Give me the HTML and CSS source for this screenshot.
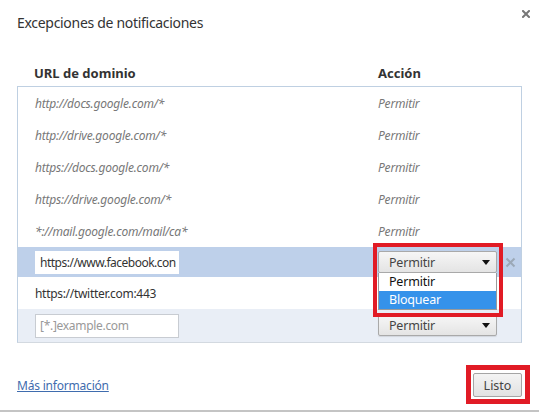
FILE: index.html
```html
<!DOCTYPE html>
<html lang="es">
<head>
<meta charset="utf-8">
<title>Excepciones de notificaciones</title>
<link rel="stylesheet" href="styles.css">
</head>
<body>
<div class="dialog">
  <div class="titlebar">
    <div class="title">Excepciones de notificaciones</div>
    <div class="close" aria-label="Cerrar">
      <svg width="8" height="8" viewBox="0 0 8 8"><path d="M1 1L7 7M7 1L1 7" stroke="#777" stroke-width="2" stroke-linecap="square"/></svg>
    </div>
  </div>
  <div class="headers">
    <div class="hcell first">URL de dominio</div>
    <div class="hcell">Acción</div>
  </div>
  <div class="list">
    <div class="row static"><div class="c1">http://docs.google.com/*</div><div class="c2">Permitir</div></div>
    <div class="row static"><div class="c1">http://drive.google.com/*</div><div class="c2">Permitir</div></div>
    <div class="row static"><div class="c1">https://docs.google.com/*</div><div class="c2">Permitir</div></div>
    <div class="row static"><div class="c1">https://drive.google.com/*</div><div class="c2">Permitir</div></div>
    <div class="row static"><div class="c1">*://mail.google.com/mail/ca*</div><div class="c2">Permitir</div></div>
    <div class="row selected">
      <div class="c1"><div class="input">https://www.facebook.con</div></div>
      <div class="c2 actions">
        <div class="select-wrap">
          <div class="select"><span>Permitir</span><span class="arrow"></span></div>
          <div class="menu">
            <div class="opt">Permitir</div>
            <div class="opt hl">Bloquear</div>
          </div>
          <div class="redbox"></div>
        </div>
        <div class="rm">
          <svg width="11" height="11" viewBox="0 0 11 11"><path d="M1.5 1.5L9.5 9.5M9.5 1.5L1.5 9.5" stroke="#9ba8b7" stroke-width="2"/></svg>
        </div>
      </div>
    </div>
    <div class="row plain"><div class="c1">https://twitter.com:443</div><div class="c2"></div></div>
    <div class="row newrow">
      <div class="c1"><div class="input placeholder">[*.]example.com</div></div>
      <div class="c2"><div class="select small"><span>Permitir</span><span class="arrow"></span></div></div>
    </div>
  </div>
  <div class="footer">
    <a class="link" href="#">Más información</a>
    <div class="btn-wrap">
      <div class="btn">Listo</div>
      <div class="redbox2"></div>
    </div>
  </div>
</div>
</body>
</html>
```
FILE: styles.css
```css
html, body {
  margin: 0;
  padding: 0;
  background: #fff;
}
body {
  width: 539px;
  height: 412px;
  overflow: hidden;
  font-family: "Noto Sans", "Open Sans", sans-serif;
  color: #333;
}
.dialog {
  height: 410px;
  border-bottom: 2px solid #c4c4c4;
  padding: 0 17px;
  display: flex;
  flex-direction: column;
}
.titlebar {
  display: flex;
  justify-content: space-between;
  padding-top: 12px;
}
.title {
  font-size: 14px;
  letter-spacing: -0.3px;
  line-height: 22px;
  color: #333;
}
.close {
  margin-top: -2px;
  margin-right: -8px;
  width: 8px;
  height: 8px;
}
.close svg { display: block; }
.headers {
  display: grid;
  grid-template-columns: 361px 1fr;
  margin-top: 30px;
  margin-bottom: 4px;
  font-size: 13px;
  line-height: 18px;
  font-weight: bold;
  color: #333;
}
.hcell.first { padding-left: 17px; }
.list {
  border: 1px solid #bfd0e2;
  border-bottom-color: #d3d9e0;
}
.row {
  display: grid;
  grid-template-columns: 360px 1fr;
  align-items: center;
  height: 32px;
  font-size: 12px;
  letter-spacing: -0.2px;
}
.row .c1 { padding-left: 17px; }
.row.static { color: #777; font-style: italic; }
.row.selected { height: 30px; background: #bed0ea; }
.row.plain { color: #333; letter-spacing: -0.3px; }
.row.newrow { height: 33px; background: #e9eef6; }
.input {
  width: 144px;
  height: 23px;
  box-sizing: border-box;
  padding: 0 3px 0 4px;
  line-height: 21px;
  background: #fff;
  border: 1px solid #fff;
  color: #333;
  white-space: nowrap;
  overflow: hidden;
  font-size: 12px;
  letter-spacing: -0.5px;
}
.input.placeholder {
  height: 24px;
  line-height: 22px;
  border-color: #c8ccd2;
  color: #999;
  letter-spacing: -0.3px;
}
.actions {
  display: flex;
  align-items: center;
}
.select-wrap {
  position: relative;
}
.select {
  width: 119px;
  height: 22px;
  box-sizing: border-box;
  border: 1px solid #a9a9a9;
  border-radius: 2px;
  background: linear-gradient(#f6f6f6, #e4e4e4);
  display: flex;
  align-items: center;
  justify-content: space-between;
  padding: 0 6px 0 10px;
  font-size: 12.5px;
  letter-spacing: -0.2px;
  color: #444;
}
.select.small { height: 21px; box-shadow: 0 1px 1px rgba(0,0,0,0.1); }
.arrow {
  width: 0;
  height: 0;
  border-left: 4px solid transparent;
  border-right: 4px solid transparent;
  border-top: 5px solid #111;
}
.menu {
  position: absolute;
  left: 0;
  top: 100%;
  width: 119px;
  box-sizing: border-box;
  border: 1px solid #9a9a9a;
  border-top: 0;
  background: #fff;
  font-size: 12.5px;
  letter-spacing: -0.2px;
  z-index: 2;
}
.opt {
  height: 18px;
  line-height: 18px;
  padding-left: 10px;
  color: #111;
}
.opt.hl {
  background: #3592ea;
  color: #fff;
}
.redbox {
  position: absolute;
  left: -5px;
  top: -8px;
  width: 130px;
  height: 74px;
  box-sizing: border-box;
  border: 4px solid #e11b25;
  z-index: 3;
  pointer-events: none;
}
.rm {
  margin-left: 8px;
  width: 11px;
  height: 11px;
}
.rm svg { display: block; }
.footer {
  margin-top: auto;
  padding-bottom: 13px;
  display: flex;
  justify-content: space-between;
  align-items: center;
}
.link {
  font-size: 12px;
  letter-spacing: -0.2px;
  color: #3f6cae;
  text-decoration: underline;
}
.btn-wrap {
  position: relative;
}
.btn {
  width: 49px;
  height: 24px;
  box-sizing: border-box;
  border: 1px solid #a5a5a5;
  border-radius: 2px;
  background: linear-gradient(#f4f4f4, #e2e2e2);
  font-size: 12.5px;
  color: #444;
  display: flex;
  align-items: center;
  justify-content: center;
}
.redbox2 {
  position: absolute;
  left: -7px;
  top: -8px;
  width: 64px;
  height: 39px;
  box-sizing: border-box;
  border: 5px solid #e11b25;
}
```
